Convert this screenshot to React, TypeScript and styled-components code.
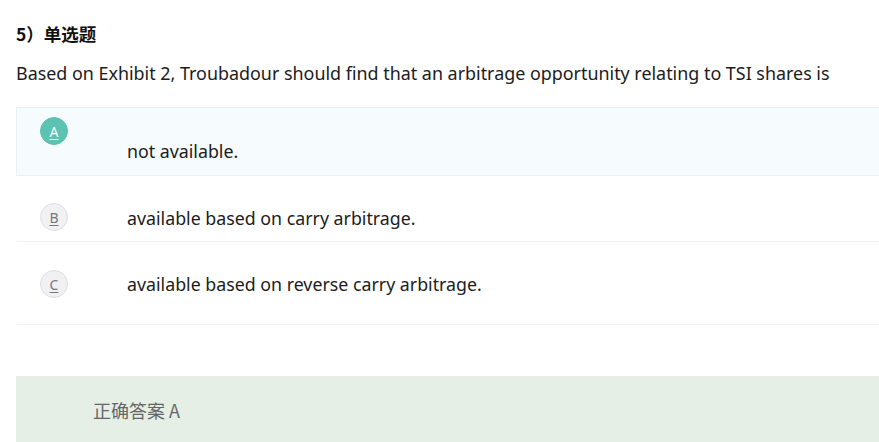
import React from "react";
import styled, { createGlobalStyle } from "styled-components";

const Global = createGlobalStyle`
  html, body { margin: 0; padding: 0; background: #fff; }
  body { font-family: "Noto Sans", "Noto Sans CJK SC", sans-serif; color: #1a1a1a; overflow: hidden; }
`;

const Page = styled.div`
  padding: 22px 0 0 16px;
  display: flex;
  flex-direction: column;
`;

const Title = styled.div`
  font-size: 17.5px;
  font-weight: 700;
  line-height: 24px;
  color: #111;
  font-family: "Noto Sans CJK SC", sans-serif;
`;

const Question = styled.div`
  margin-top: 15px;
  font-size: 17.9px;
  line-height: 24px;
  color: #1c1c1c;
  white-space: nowrap;
`;

const Options = styled.div`
  margin-top: 22px;
  display: flex;
  flex-direction: column;
`;

const Row = styled.div<{ $active?: boolean; $h: number }>`
  display: flex;
  align-items: flex-start;
  height: ${(p) => p.$h}px;
  box-sizing: border-box;
  padding-left: 23px;
  background: ${(p) => (p.$active ? "#f6fbfe" : "#fff")};
  border: 1px solid ${(p) => (p.$active ? "#e9f1f5" : "transparent")};
  border-bottom: 1px solid ${(p) => (p.$active ? "#e9f1f5" : "#f0f0f0")};
  border-right: none;
`;

const Badge = styled.div<{ $active?: boolean; $top: number }>`
  flex: none;
  width: 28px;
  height: 28px;
  border-radius: 50%;
  box-sizing: border-box;
  margin-top: ${(p) => p.$top}px;
  display: flex;
  align-items: center;
  justify-content: center;
  font-size: 14px;
  text-decoration: underline;
  text-underline-offset: 2px;
  background: ${(p) => (p.$active ? "#5cc2b1" : "#f1f1f4")};
  color: ${(p) => (p.$active ? "#fff" : "#777")};
  border: 1px solid ${(p) => (p.$active ? "#5cc2b1" : "#dedee3")};
`;

const OptText = styled.div<{ $top: number }>`
  margin-left: 59px;
  margin-top: ${(p) => p.$top}px;
  font-size: 17.8px;
  line-height: 24px;
  color: #1c1c1c;
`;

const Answer = styled.div`
  margin-top: 51px;
  height: 80px;
  box-sizing: border-box;
  background: #e5efe6;
  padding: 22px 0 0 77px;
  font-size: 18px;
  line-height: 24px;
  color: #666;
  font-family: "Noto Sans CJK SC", sans-serif;
`;

const opts = [
  { k: "A", t: "not available.", h: 69, ct: 9, tt: 31, active: true },
  { k: "B", t: "available based on carry arbitrage.", h: 66, ct: 26, tt: 29 },
  { k: "C", t: "available based on reverse carry arbitrage.", h: 83, ct: 27, tt: 29 },
];

export default function App() {
  return (
    <>
      <Global />
      <Page>
        <Title>5）单选题</Title>
        <Question>
          Based on Exhibit 2, Troubadour should find that an arbitrage opportunity relating to TSI shares is
        </Question>
        <Options>
          {opts.map((o) => (
            <Row key={o.k} $active={o.active} $h={o.h}>
              <Badge $active={o.active} $top={o.ct}>{o.k}</Badge>
              <OptText $top={o.tt}>{o.t}</OptText>
            </Row>
          ))}
        </Options>
        <Answer>正确答案 A</Answer>
      </Page>
    </>
  );
}
